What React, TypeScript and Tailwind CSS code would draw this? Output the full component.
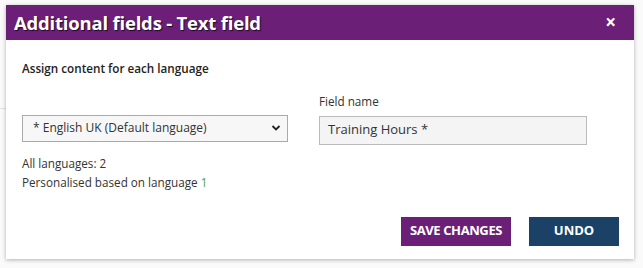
import React from "react";

export default function App() {
  return (
    <div
      className="w-[643px] h-[268px] bg-[#fafafa] relative overflow-hidden"
      style={{ fontFamily: '"Open Sans", "Noto Sans", sans-serif' }}
    >
      <div className="absolute left-0 top-[108px] w-[6px] h-px bg-[#e2e2e2]" />
      <div className="absolute left-[6px] top-[5px] w-[628px] h-[254px] bg-white shadow-[0_1px_4px_rgba(0,0,0,0.3)] flex flex-col">
        <div className="h-[35px] bg-[#6b1f77] flex items-center justify-between pl-[8px] pr-[18px] shrink-0">
          <span className="text-white font-bold text-[18.5px] tracking-[-0.2px] [text-shadow:1px_1px_1px_rgba(0,0,0,0.7)]">
            Additional fields - Text field
          </span>
          <span className="text-white font-bold text-[19px] leading-none">×</span>
        </div>
        <div className="flex-1 flex flex-col pl-[16px] pr-[15px]">
          <div className="text-[11.7px] text-[#222] font-semibold mt-[20px]">Assign content for each language</div>
          <div className="flex gap-[31px] mt-[15px]">
            <div className="w-[266px] pt-[22px]">
              <div className="h-[27px] border border-[#aaa] bg-[#f7f7f7] flex items-center justify-between pl-[10px] pr-[6px]">
                <span className="text-[12px] text-[#333]">* English UK (Default language)</span>
                <svg width="10" height="8" viewBox="0 0 10 8">
                  <path d="M1.5 2 L5 5.5 L8.5 2" stroke="#222" strokeWidth="1.8" fill="none" />
                </svg>
              </div>
            </div>
            <div className="w-[268px]">
              <div className="text-[11.7px] text-[#333] h-[23px]">Field name</div>
              <div className="h-[29px] border border-[#bbb] bg-[#f4f4f4] flex items-center pl-[8px]">
                <span className="text-[13px] text-[#333]">Training Hours *</span>
              </div>
            </div>
          </div>
          <div className="text-[11.7px] text-[#333] mt-[10px]">All languages: 2</div>
          <div className="text-[11.7px] text-[#333] mt-[2px]">
            Personalised based on language <span className="text-[#4aa14a]">1</span>
          </div>
          <div className="flex justify-end gap-[18px] mt-[25px]">
            <button className="w-[110px] h-[29px] bg-[#6b1f77] text-white text-[13px] font-bold tracking-[-0.4px]">
              SAVE CHANGES
            </button>
            <button className="w-[90px] h-[29px] bg-[#1b4266] text-white text-[13px] font-bold">
              UNDO
            </button>
          </div>
        </div>
      </div>
    </div>
  );
}
